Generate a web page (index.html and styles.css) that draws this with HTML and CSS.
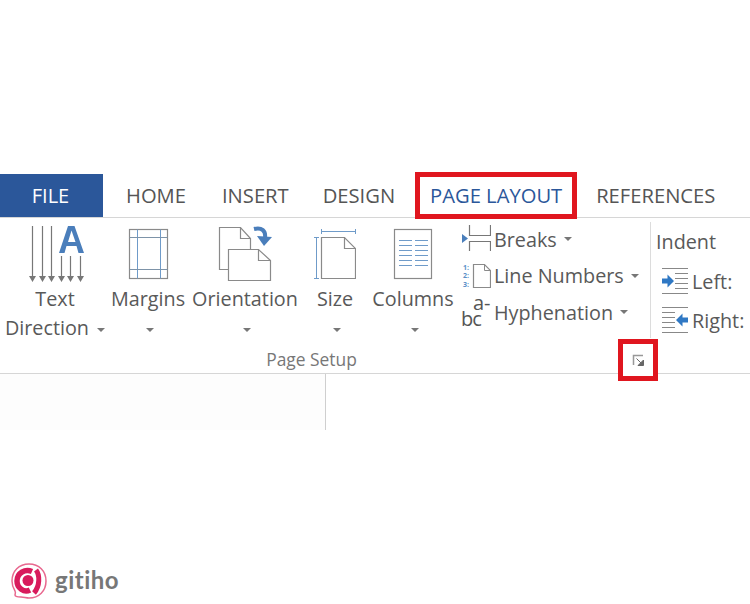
FILE: index.html
```html
<!DOCTYPE html>
<html lang="en">
<head>
    <meta charset="UTF-8">
    <title>Page Setup</title>
    <link rel="stylesheet" href="styles.css">
</head>
<body>
    <div class="tabs">
        <div class="tab tab-file">FILE</div>
        <div class="tab tab-home">HOME</div>
        <div class="tab tab-insert">INSERT</div>
        <div class="tab tab-design">DESIGN</div>
        <div class="tab tab-active">PAGE LAYOUT</div>
        <div class="tab tab-refs">REFERENCES</div>
    </div>

    <div class="ribbon">
        <div class="group-setup">
            <div class="commands">
                <div class="cmd">
                    <svg class="cmd-icon" width="60" height="58" viewBox="0 0 60 58">
                        <path d="M7.500 0v54M17.500 0v54M26.500 0v54M36.500 30v24M45.500 30v24M55.500 30v24" fill="none" stroke="#777" stroke-width="1.200"/>
                        <path d="M4 50h7l-3.500 6zM14 50h7l-3.500 6zM23 50h7l-3.500 6zM33 50h7l-3.500 6zM42 50h7l-3.500 6zM52 50h7l-3.500 6z" fill="#777"/>
                        <path fill-rule="evenodd" d="M34 27L43 0h6.500L59 27h-5.500l-2-7H41.500l-2 7zM43 16h7.500L46.500 4.500z" fill="#4a7ebb"/>
                    </svg>
                    <div class="cmd-label">Text</div>
                    <div class="cmd-label">Direction <span class="caret"></span></div>
                </div>
                <div class="cmd">
                    <svg class="cmd-icon" width="42" height="58" viewBox="0 0 42 58">
                        <rect x="2.500" y="3.500" width="38" height="49" fill="none" stroke="#8a8a8a" stroke-width="1.200"/>
                        <path d="M10.500 3.500v49M33.500 3.500v49" stroke="#6f9bc9" fill="none"/>
                        <path d="M2.500 11.500h38M2.500 43.500h38" stroke="#7d93a8" fill="none"/>
                    </svg>
                    <div class="cmd-label">Margins</div>
                    <div class="cmd-label"><span class="caret"></span></div>
                </div>
                <div class="cmd">
                    <svg class="cmd-icon" width="56" height="58" viewBox="0 0 56 58">
                        <path d="M11 43.500H2.500V1.500h21l10 11v11" fill="none" stroke="#8a8a8a" stroke-width="1.200"/>
                        <path d="M23.500 1.500v11h10" fill="none" stroke="#8a8a8a" stroke-width="1.200"/>
                        <path d="M11.500 23.500h30l12 11v20h-42z" fill="#fff" stroke="#8a8a8a" stroke-width="1.200"/>
                        <path d="M41.500 23.500v11h12" fill="none" stroke="#8a8a8a" stroke-width="1.200"/>
                        <path d="M37 3c8-2 12 2 11 9" fill="none" stroke="#4a7ebb" stroke-width="4"/>
                        <path d="M40 10l15 1-8 9z" fill="#4a7ebb"/>
                    </svg>
                    <div class="cmd-label">Orientation</div>
                    <div class="cmd-label"><span class="caret"></span></div>
                </div>
                <div class="cmd">
                    <svg class="cmd-icon" width="42" height="58" viewBox="0 0 42 58">
                        <path d="M7.500 5.500h34M7.500 3v5M41.500 3v5M2.500 11.500v41M0 11.500h5M0 52.500h5" fill="none" stroke="#6f9bc9"/>
                        <path d="M7.500 11.500h23l11 11v30h-34z" fill="none" stroke="#8a8a8a" stroke-width="1.200"/>
                        <path d="M30.500 11.500v11h11" fill="none" stroke="#8a8a8a" stroke-width="1.200"/>
                    </svg>
                    <div class="cmd-label">Size</div>
                    <div class="cmd-label"><span class="caret"></span></div>
                </div>
                <div class="cmd">
                    <svg class="cmd-icon" width="40" height="58" viewBox="0 0 40 58">
                        <rect x="1.500" y="3.500" width="37" height="49" fill="none" stroke="#8a8a8a" stroke-width="1.200"/>
                        <path d="M6 14.500h13M22 14.500h13M6 19.500h13M22 19.500h13M6 24.500h13M22 24.500h13M6 29.500h13M22 29.500h13M6 34.500h13M22 34.500h13M6 39.500h13M22 39.500h13" stroke="#6f9bc9" fill="none"/>
                    </svg>
                    <div class="cmd-label">Columns</div>
                    <div class="cmd-label"><span class="caret"></span></div>
                </div>
                <div class="small-cmds">
                    <div class="small-cmd">
                        <svg width="31" height="28" viewBox="0 0 31 28">
                            <path d="M2 9l6 4.500L2 18z" fill="#4a7ebb"/>
                            <path d="M9.500 0v10.500h21V0M9.500 26v-9.500h21V26" fill="none" stroke="#777" stroke-width="1.200"/>
                        </svg>
                        <span>Breaks</span><span class="caret"></span>
                    </div>
                    <div class="small-cmd">
                        <svg width="31" height="28" viewBox="0 0 31 28">
                            <path d="M13.500 2.500h11l6 6v17h-17z" fill="none" stroke="#8a8a8a" stroke-width="1.200"/>
                            <path d="M24.500 2.500v6h6" fill="none" stroke="#8a8a8a"/>
                            <text x="3" y="8" class="tiny">1:</text>
                            <text x="3" y="16" class="tiny">2:</text>
                            <text x="3" y="25" class="tiny">3:</text>
                        </svg>
                        <span>Line Numbers</span><span class="caret"></span>
                    </div>
                    <div class="small-cmd">
                        <div class="hyph"><span class="hyph-top">a-</span><span class="hyph-bot">bc</span></div>
                        <span>Hyphenation</span><span class="caret"></span>
                    </div>
                </div>
            </div>
            <div class="group-label">Page Setup</div>
            <div class="launcher">
                <svg width="13" height="13" viewBox="0 0 13 13">
                    <path d="M1.500 11V1.500H11" fill="none" stroke="#999" stroke-width="1.500"/>
                    <path d="M4.500 4.500L10 10M11.500 6v5.500H6z" fill="#666" stroke="#666"/>
                </svg>
            </div>
        </div>
        <div class="divider"></div>
        <div class="group-indent">
            <div class="indent-title">Indent</div>
            <div class="indent-row">
                <svg width="28" height="26" viewBox="0 0 28 26">
                    <path d="M1 .500h26M1 25.500h26M14 5.500h13M14 10.500h13M14 15.500h13M14 20.500h13" fill="none" stroke="#888"/>
                    <path d="M1 10.500h5.500V6.500l6.500 6.500-6.500 6.500v-4H1z" fill="#2f78c4"/>
                </svg>
                <span>Left:</span>
            </div>
            <div class="indent-row">
                <svg width="28" height="26" viewBox="0 0 28 26">
                    <path d="M1 .500h26M1 25.500h26M1 5.500h13M1 10.500h13M1 15.500h13M1 20.500h13" fill="none" stroke="#888"/>
                    <path d="M27 10.500h-5.500V6.500L15 13l6.500 6.500v-4H27z" fill="#2f78c4"/>
                </svg>
                <span>Right:</span>
            </div>
        </div>
    </div>

    <div class="below">
        <div class="below-left"></div>
    </div>

    <div class="brand">
        <svg width="38" height="40" viewBox="0 0 38 40">
            <path d="M19 3c10 0 17 7 17 17s-7 17-17 17c-3 0-5-1-8-1-3 0-6 0-6-2 0-1 1-2 0-4-2-3-3-6-3-10C2 10 9 3 19 3z" fill="#fff" stroke="#e8688f" stroke-width="1.500"/>
            <path d="M22 10.500C15 7.500 7 12 7 20c0 7 7 12 13 9" fill="none" stroke="#d81b5c" stroke-width="5.500"/>
            <circle cx="18" cy="19.500" r="5.500" fill="#d81b5c"/>
            <path d="M26 9c4 5 4 16-2 23" fill="none" stroke="#d81b5c" stroke-width="5"/>
        </svg>
        <span class="brand-name">gitiho</span>
    </div>
</body>
</html>
```

FILE: styles.css
```css
html, body {
    margin: 0;
    padding: 0;
    height: 604px;
    overflow: hidden;
}

body {
    width: 750px;
    background: #fff;
    color: #595959;
    font-family: "Open Sans", "Noto Sans", sans-serif;
    font-size: 19.800px;
    display: flex;
    flex-direction: column;
    padding-top: 174px;
    box-sizing: border-box;
}

.tabs {
    display: flex;
    height: 43px;
    border-bottom: 1px solid #d6d6d6;
    flex-shrink: 0;
    white-space: nowrap;
}

.tab {
    display: flex;
    align-items: center;
    justify-content: center;
    padding-bottom: 2px;
    font-size: 20.200px;
    color: #555;
}

.tab-file {
    width: 101px;
    padding-right: 2px;
    padding-bottom: 0;
    background: #2b579a;
    color: #fff;
    font-size: 20px;
}

.tab-home { margin-left: 23px; }
.tab-insert { margin-left: 36px; }
.tab-design { margin-left: 34px; }

.tab-active {
    position: relative;
    z-index: 1;
    width: 162px;
    height: 47px;
    margin: -2px 0 0 20px;
    border: 5px solid #e0161f;
    box-sizing: border-box;
    color: #2b579a;
}

.tab-refs { margin-left: 19px; }

.ribbon {
    display: flex;
    height: 155px;
    border-bottom: 1px solid #d6d6d6;
    flex-shrink: 0;
}

.group-setup {
    position: relative;
    width: 650px;
    height: 150px;
    flex-shrink: 0;
}

.divider {
    width: 1px;
    height: 116px;
    margin-top: 4px;
    background: #dcdcdc;
    flex-shrink: 0;
}

.commands {
    display: grid;
    grid-template-columns: 110px 76px 118px 62px 94px 190px;
    height: 124px;
}

.cmd {
    display: flex;
    flex-direction: column;
    align-items: center;
    white-space: nowrap;
}

.cmd-icon {
    margin-top: 8px;
    height: 58px;
    flex-shrink: 0;
}

.cmd-label {
    height: 29px;
    line-height: 29px;
}

.caret {
    display: inline-block;
    width: 0;
    height: 0;
    margin-left: 3px;
    vertical-align: middle;
    border-left: 4px solid transparent;
    border-right: 4px solid transparent;
    border-top: 4px solid #777;
}

.small-cmds {
    display: flex;
    flex-direction: column;
    padding-top: 3px;
}

.small-cmd {
    display: flex;
    align-items: center;
    gap: 3px;
    height: 36.500px;
    white-space: nowrap;
}

.small-cmd svg {
    flex-shrink: 0;
}

.small-cmd .caret {
    margin-left: 4px;
}

.tiny {
    font-size: 7px;
    font-weight: bold;
    fill: #5a8fc7;
}

.hyph {
    position: relative;
    width: 31px;
    height: 32px;
    flex-shrink: 0;
    font-size: 20px;
    line-height: 20px;
    color: #555;
}

.hyph-top {
    position: absolute;
    left: 13px;
    top: -3px;
}

.hyph-bot {
    position: absolute;
    left: 1px;
    top: 13px;
    letter-spacing: -1px;
}

.group-label {
    text-align: center;
    font-size: 17.400px;
    line-height: 24px;
    padding-top: 5px;
    color: #777;
    margin-right: 27px;
}

.launcher {
    position: absolute;
    left: 618px;
    top: 121px;
    width: 40px;
    height: 42px;
    box-sizing: border-box;
    border: 5px solid #e0161f;
    background: #fff;
    display: flex;
    align-items: center;
    justify-content: center;
    z-index: 1;
}

.group-indent {
    padding: 10px 0 0 5px;
    white-space: nowrap;
}

.indent-title {
    line-height: 28px;
    margin-bottom: 12px;
}

.indent-row {
    display: flex;
    align-items: center;
    gap: 3px;
    height: 26px;
    margin: 0 0 13px 5px;
}

.below {
    height: 56px;
    flex-shrink: 0;
    display: flex;
}

.below-left {
    width: 325px;
    background: #fdfdfd;
    border-right: 1px solid #cfcfcf;
}

.brand {
    display: flex;
    align-items: center;
    gap: 7px;
    margin: 131px 0 0 10px;
}

.brand-name {
    font-family: Lato, "Open Sans", sans-serif;
    font-weight: 700;
    font-size: 24px;
    color: #777;
    letter-spacing: 0.5px;
    margin-bottom: 3px;
}
```
